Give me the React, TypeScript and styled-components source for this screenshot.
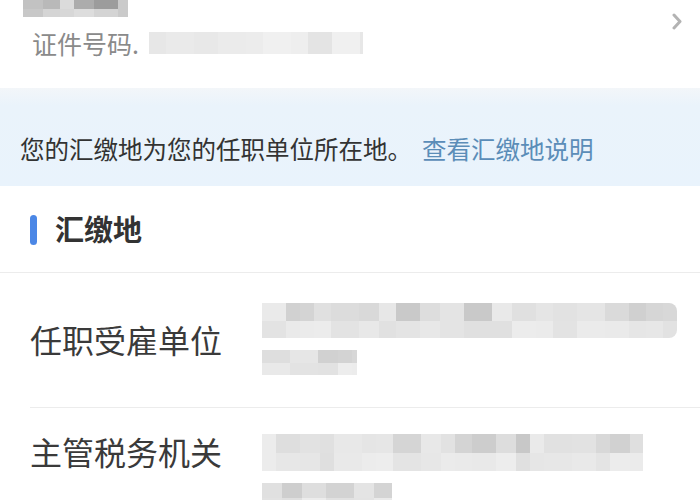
import React from "react";
import styled, { createGlobalStyle } from "styled-components";

const GlobalStyle = createGlobalStyle`
  html, body { margin: 0; padding: 0; background: #ffffff; }
  body { font-family: "Noto Sans CJK SC", "Noto Sans", sans-serif; }
`;

const Page = styled.div`
  width: 700px;
  height: 500px;
  overflow: hidden;
  background: #ffffff;
  display: flex;
  flex-direction: column;
`;

const TopSection = styled.div`
  height: 88px;
  display: flex;
  justify-content: space-between;
  flex-shrink: 0;
`;

const TopLeft = styled.div`
  display: flex;
  flex-direction: column;
`;

const NameBlock = styled.div`
  margin-left: 23px;
`;

const IdRow = styled.div`
  margin-top: 11px;
  margin-left: 32px;
  display: flex;
  align-items: center;
  gap: 10px;
`;

const IdLabel = styled.span`
  font-size: 25px;
  line-height: 30px;
  color: #8a8a8a;
`;

const ChevronBox = styled.div`
  margin-top: 11px;
  margin-right: 17px;
  width: 12px;
  height: 17px;
`;

const Notice = styled.div`
  height: 98px;
  box-sizing: border-box;
  padding: 24px 0 0 20px;
  display: flex;
  align-items: center;
  background: linear-gradient(#f3f6f9 0%, #eaf3fb 18%, #e9f3fc 100%);
  flex-shrink: 0;
`;

const NoticeText = styled.span`
  font-size: 24.5px;
  line-height: 32px;
  color: #333333;
  white-space: nowrap;
`;

const NoticeLink = styled.span`
  color: #5b8db8;
  margin-left: 10px;
`;

const SectionHeading = styled.div`
  height: 87px;
  box-sizing: border-box;
  display: flex;
  align-items: center;
  padding-left: 30px;
  gap: 18px;
  border-bottom: 1px solid #ececec;
  flex-shrink: 0;
`;

const HeadingBar = styled.div`
  width: 7px;
  height: 30px;
  border-radius: 4px;
  background: #4b87e6;
  margin-top: 1px;
`;

const HeadingText = styled.span`
  font-size: 29px;
  line-height: 36px;
  font-weight: 700;
  color: #333333;
  margin-top: -2px;
`;

const RowList = styled.div`
  margin-left: 30px;
  display: flex;
  flex-direction: column;
`;

const Row = styled.div<{ $pt: number; $pb: number }>`
  display: flex;
  padding: ${(p) => p.$pt}px 0 ${(p) => p.$pb}px 0;
  & + & {
    border-top: 1px solid #ececec;
  }
`;

const RowLabel = styled.div<{ $centered: boolean }>`
  width: 232px;
  flex-shrink: 0;
  font-size: 32px;
  line-height: 40px;
  color: #3a3a3a;
  align-self: ${(p) => (p.$centered ? "center" : "flex-start")};
  margin-top: ${(p) => (p.$centered ? "0" : "-3px")};
`;

const ValueLines = styled.div`
  display: flex;
  flex-direction: column;
  gap: 12px;
`;

const MosaicWrap = styled.div<{ $w: number; $h: number; $round: boolean }>`
  width: ${(p) => p.$w}px;
  height: ${(p) => p.$h}px;
  display: flex;
  overflow: hidden;
  border-radius: ${(p) => (p.$round ? "0 8px 8px 0" : "0")};
  filter: blur(0.6px);
`;

const MosaicCol = styled.div`
  display: flex;
  flex-direction: column;
  height: 100%;
  flex-shrink: 0;
`;

const MosaicCell = styled.div`
  flex: 1;
`;

function makeRand(seed: number) {
  let s = seed;
  return () => {
    s = (s * 9301 + 49297) % 233280;
    return s / 233280;
  };
}

type MosaicProps = {
  width: number;
  height: number;
  seed: number;
  rows?: number;
  dark?: number;
  light?: number;
  round?: boolean;
};

const Mosaic: React.FC<MosaicProps> = ({
  width,
  height,
  seed,
  rows = 2,
  dark = 200,
  light = 238,
  round = false,
}) => {
  const rand = makeRand(seed);
  const cols: { w: number; cells: string[] }[] = [];
  let used = 0;
  const widths = [14, 17, 20, 24, 28];
  while (used < width) {
    let w = widths[Math.floor(rand() * widths.length)];
    if (used + w > width) w = width - used;
    const cells: string[] = [];
    for (let r = 0; r < rows; r++) {
      const bias = r === 0 ? 0 : (light - dark) * 0.6;
      const v = Math.round(dark + bias + rand() * (light - dark - bias));
      const c = Math.min(245, v);
      cells.push(`rgb(${c},${c},${c})`);
    }
    cols.push({ w, cells });
    used += w;
  }
  return (
    <MosaicWrap $w={width} $h={height} $round={round}>
      {cols.map((col, i) => (
        <MosaicCol key={i} style={{ width: col.w }}>
          {col.cells.map((bg, j) => (
            <MosaicCell key={j} style={{ background: bg }} />
          ))}
        </MosaicCol>
      ))}
    </MosaicWrap>
  );
};

const Chevron = () => (
  <svg width="12" height="17" viewBox="0 0 12 17">
    <polyline
      points="3,2 9,8.5 3,15"
      fill="none"
      stroke="#b3b3b3"
      strokeWidth="3"
      strokeLinecap="round"
      strokeLinejoin="round"
    />
  </svg>
);

export default function App() {
  return (
    <>
      <GlobalStyle />
      <Page>
        <TopSection>
          <TopLeft>
            <NameBlock>
              <Mosaic width={105} height={17} seed={7} rows={2} dark={150} light={228} />
            </NameBlock>
            <IdRow>
              <IdLabel>证件号码.</IdLabel>
              <Mosaic width={214} height={22} seed={3} rows={1} dark={228} light={244} />
            </IdRow>
          </TopLeft>
          <ChevronBox>
            <Chevron />
          </ChevronBox>
        </TopSection>

        <Notice>
          <NoticeText>
            您的汇缴地为您的任职单位所在地。
            <NoticeLink>查看汇缴地说明</NoticeLink>
          </NoticeText>
        </Notice>

        <SectionHeading>
          <HeadingBar />
          <HeadingText>汇缴地</HeadingText>
        </SectionHeading>

        <RowList>
          <Row $pt={30} $pb={32}>
            <RowLabel $centered>任职受雇单位</RowLabel>
            <ValueLines>
              <Mosaic width={415} height={35} seed={11} round />
              <Mosaic width={95} height={25} seed={19} />
            </ValueLines>
          </Row>
          <Row $pt={26} $pb={20}>
            <RowLabel $centered={false}>主管税务机关</RowLabel>
            <ValueLines>
              <Mosaic width={381} height={37} seed={23} />
              <Mosaic width={130} height={30} seed={31} />
            </ValueLines>
          </Row>
        </RowList>
      </Page>
    </>
  );
}
